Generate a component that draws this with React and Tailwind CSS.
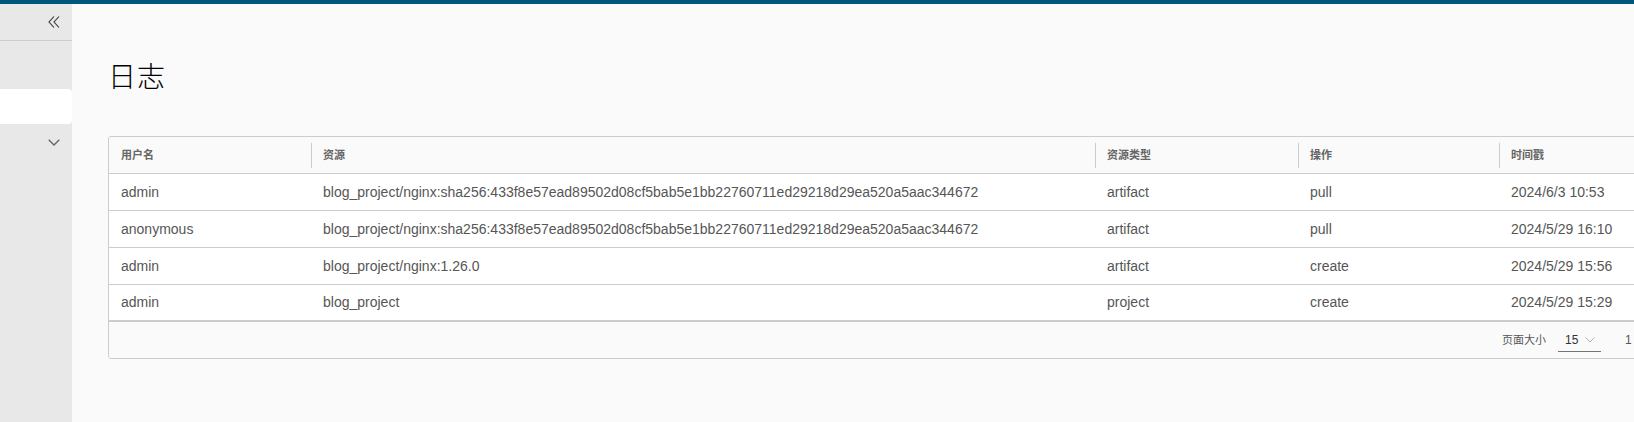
import React from "react";

const rows = [
  {
    user: "admin",
    resource: "blog_project/nginx:sha256:433f8e57ead89502d08cf5bab5e1bb22760711ed29218d29ea520a5aac344672",
    type: "artifact",
    op: "pull",
    time: "2024/6/3 10:53",
  },
  {
    user: "anonymous",
    resource: "blog_project/nginx:sha256:433f8e57ead89502d08cf5bab5e1bb22760711ed29218d29ea520a5aac344672",
    type: "artifact",
    op: "pull",
    time: "2024/5/29 16:10",
  },
  {
    user: "admin",
    resource: "blog_project/nginx:1.26.0",
    type: "artifact",
    op: "create",
    time: "2024/5/29 15:56",
  },
  {
    user: "admin",
    resource: "blog_project",
    type: "project",
    op: "create",
    time: "2024/5/29 15:29",
  },
];

const cols = "grid grid-cols-[202px_784px_203px_201px_1fr]";

function HeadCell({ label, first }) {
  return (
    <div className="relative flex items-center h-full pl-[12px]">
      {!first && <span className="absolute left-0 top-[6px] h-[25px] w-px bg-[#cccccc]" />}
      <span className="text-[11px] font-semibold text-[#666666]">{label}</span>
    </div>
  );
}

export default function App() {
  return (
    <div
      className="w-[1634px] h-[422px] flex flex-col overflow-hidden bg-[#fafafa]"
      style={{ fontFamily: '"Liberation Sans", "Noto Sans CJK SC", sans-serif' }}
    >
      <div className="h-[4px] bg-[#00567a] shrink-0" />
      <div className="flex flex-1 min-h-0">
        {/* sidebar */}
        <aside className="w-[72px] shrink-0 bg-[#e8e8e8] flex flex-col">
          <div className="h-[37px] border-b border-[#cccccc] flex items-center justify-end pr-[11px] pb-[1px]">
            <svg width="13" height="12" viewBox="0 0 13 12" fill="none" stroke="#333" strokeWidth="1.1">
              <path d="M6 0.5 L1 6 L6 11.5" />
              <path d="M11 0.5 L6 6 L11 11.5" />
            </svg>
          </div>
          <div className="mt-[48px] h-[35px] bg-white rounded-r-[4px]" />
          <div className="h-[37px] flex items-center justify-end pr-[12px]">
            <svg width="12" height="7" viewBox="0 0 12 7" fill="none" stroke="#666" strokeWidth="1.4">
              <path d="M0.7 0.7 L6 6 L11.3 0.7" />
            </svg>
          </div>
        </aside>

        {/* main */}
        <main className="flex-1 min-w-0 overflow-hidden pl-[36px] pt-[56px]">
          <h2 className="text-[28px] leading-[36px] font-light text-black tracking-[1px]">日志</h2>

          <div className="mt-[40px] w-[1700px] border border-[#cccccc] rounded-[3px] bg-white overflow-hidden">
            <div className={`${cols} h-[37px] bg-[#fafafa] border-b border-[#cccccc]`}>
              <HeadCell label="用户名" first />
              <HeadCell label="资源" />
              <HeadCell label="资源类型" />
              <HeadCell label="操作" />
              <HeadCell label="时间戳" />
            </div>
            {rows.map((r, i) => (
              <div
                key={i}
                className={`${cols} h-[37px] items-center text-[14px] text-[#565656] ${
                  i === rows.length - 1 ? "border-b-2" : "border-b"
                } border-[#cccccc]`}
              >
                <div className="pl-[12px]">{r.user}</div>
                <div className="pl-[12px] whitespace-nowrap">{r.resource}</div>
                <div className="pl-[12px]">{r.type}</div>
                <div className="pl-[12px]">{r.op}</div>
                <div className="pl-[12px] whitespace-nowrap">{r.time}</div>
              </div>
            ))}
            <div className={`${cols} h-[36px] bg-[#fafafa]`}>
              <div className="col-start-5 flex items-center pl-[3px] text-[11px] text-[#565656] whitespace-nowrap">
                <span>页面大小</span>
                <div className="ml-[12px] w-[43px] h-[24px] border-b border-[#737373] flex items-center pl-[7px] pr-[6px] justify-between">
                  <span className="text-[12px] text-[#333]">15</span>
                  <svg width="10" height="6" viewBox="0 0 10 6" fill="none" stroke="#b3b3b3" strokeWidth="1">
                    <path d="M0.5 0.5 L5 5 L9.5 0.5" />
                  </svg>
                </div>
                <span className="ml-[24px] text-[12px]">1 - 4 共计 4 条记录</span>
              </div>
            </div>
          </div>
        </main>
      </div>
    </div>
  );
}
